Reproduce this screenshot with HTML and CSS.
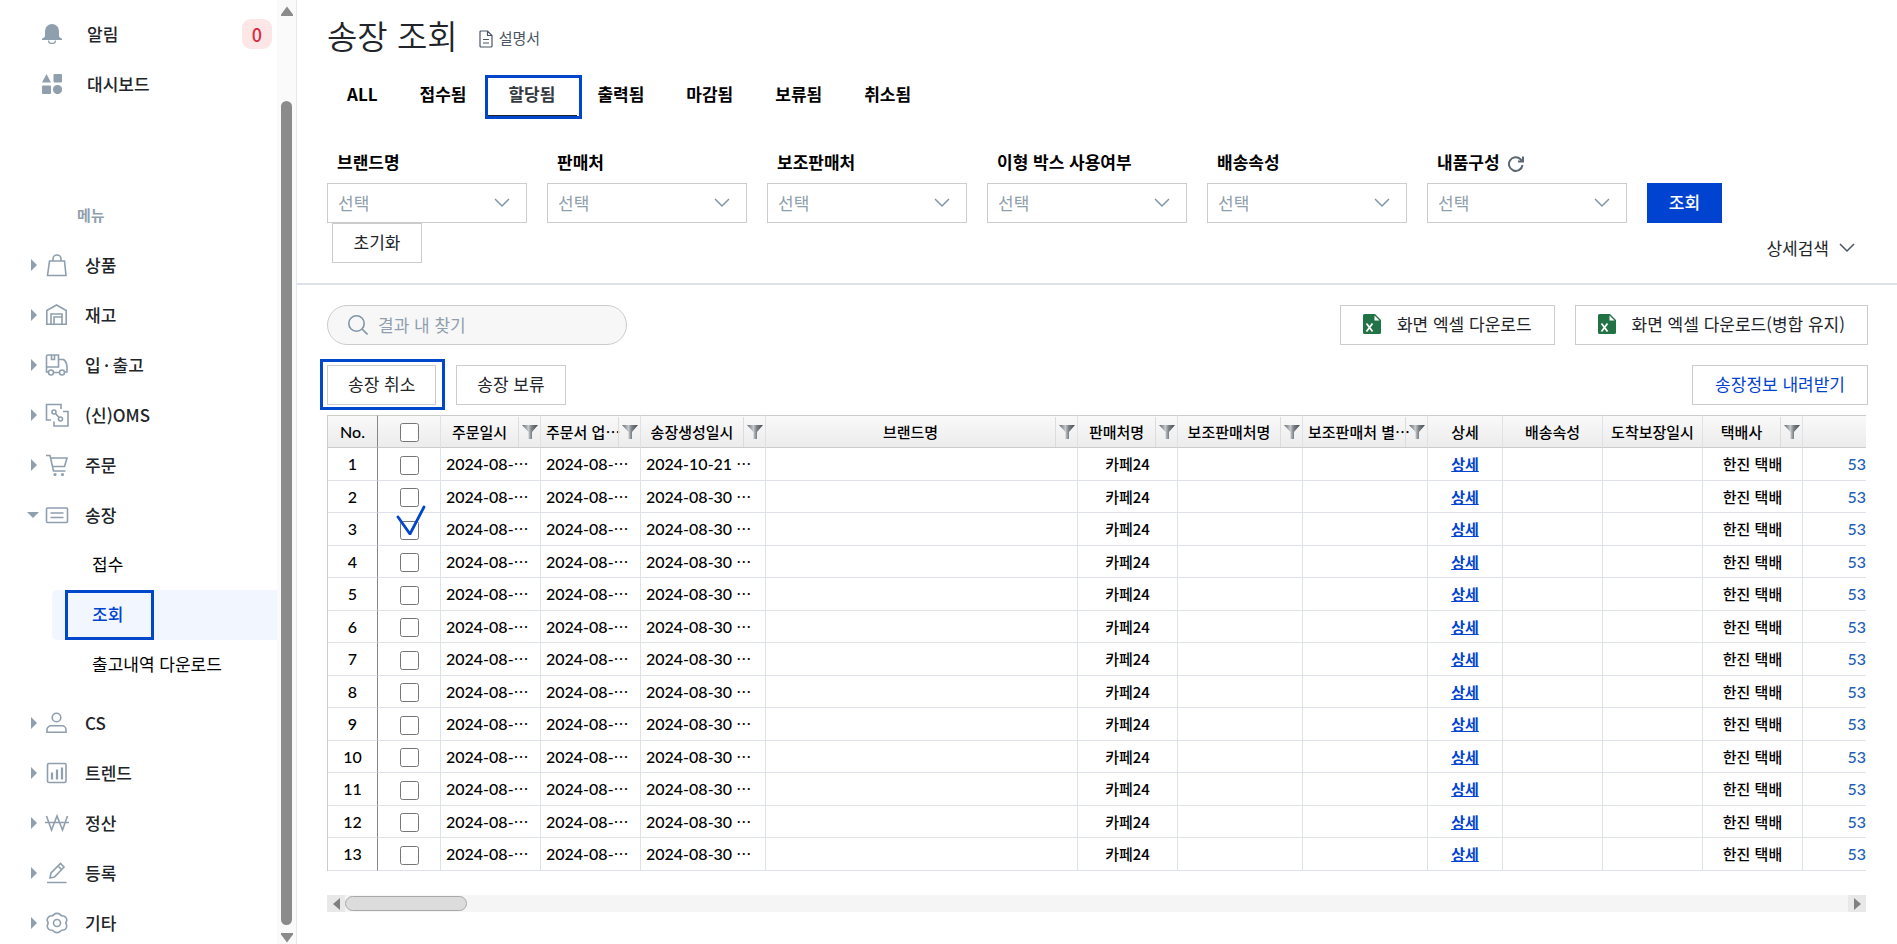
FILE: index.html
```html
<!DOCTYPE html>
<html lang="ko">
<head>
<meta charset="utf-8">
<title>송장 조회</title>
<link rel="stylesheet" href="styles.css">
</head>
<body>
<svg class="defs" aria-hidden="true">
  <defs>
    <linearGradient id="funnel-fill" x1="0" x2="1" y1="0" y2="0">
      <stop offset="0" stop-color="#5f6469"/><stop offset=".4" stop-color="#c5cace"/><stop offset=".6" stop-color="#7d8388"/><stop offset="1" stop-color="#44484c"/>
    </linearGradient>
    <symbol id="funnel" viewBox="0 0 16 14"><path d="M0 0h16L10 7v7H6.500V7z" fill="url(#funnel-fill)"/></symbol>
    <symbol id="chevron" viewBox="0 0 16 10"><path d="M1 1l7 7 7-7" fill="none" stroke="currentColor" stroke-width="1.500"/></symbol>
    <symbol id="excel" viewBox="0 0 18 20"><path d="M1.500 0H12l6 6v12.500a1.500 1.500 0 0 1-1.500 1.500h-15A1.500 1.500 0 0 1 0 18.500v-17A1.500 1.500 0 0 1 1.500 0z" fill="#217346"/><path d="M11.500 1.500V6.500h5z" fill="#fff"/><path d="M3.500 9.500l6 8M9.500 9.500l-6 8" stroke="#fff" stroke-width="1.800"/></symbol>
  </defs>
</svg>
<div class="app">
  <aside class="sidebar">
    <nav class="menu">
      <a class="top-item" href="#"><svg class="top-icon" viewBox="0 0 20 20"><path d="M10 0a7 7 0 0 1 7 7v4.500c0 1.500 1 2.500 3 3V16H0v-1.500c2-.5 3-1.500 3-3V7a7 7 0 0 1 7-7z" fill="currentColor"/><path d="M6.500 16.500a3.500 3 0 0 0 7 0" fill="none" stroke="currentColor" stroke-width="1.400"/></svg><span>알림</span><span class="badge">0</span></a>
      <a class="top-item" href="#"><svg class="top-icon" viewBox="0 0 20 20" fill="currentColor"><path d="M4.500 0L9 8.500H0z"/><rect x="11.500" width="8.500" height="8.500" rx="1"/><rect y="11.500" width="9" height="8.500" rx="1"/><circle cx="15.500" cy="15.500" r="4.600"/></svg><span>대시보드</span></a>
      <p class="menu-label">메뉴</p>
      <a class="item" href="#"><span class="caret"></span><svg class="icon" viewBox="0 0 24 24"><path d="M4.500 8h15l1.500 14.500H2.500zM8 8V6a4 4 0 0 1 8 0v2"/></svg><span>상품</span></a>
      <a class="item" href="#"><span class="caret"></span><svg class="icon" viewBox="0 0 24 24"><path d="M1.800 21.300V7.500L11.500 2l9.700 5.500v13.800zM6 21V11h11v10M9 21v-7h8"/></svg><span>재고</span></a>
      <a class="item" href="#"><span class="caret"></span><svg class="icon" viewBox="0 0 24 24"><path d="M3 19H1.500V3.500A1.500 1.500 0 0 1 3 2h10.500v12H2M6.500 2v4.500h3V2M9 19.500h5M14 6.500h4.500c2 1.500 3.500 5 3.500 8V19h-2"/><circle cx="6" cy="19.500" r="2.500"/><circle cx="17" cy="19.500" r="2.500"/></svg><span>입&thinsp;·&thinsp;출고</span></a>
      <a class="item" href="#"><span class="caret"></span><svg class="icon" viewBox="0 0 24 24"><path d="M6 17H1.500V1.500H16V6M18 8.500h5V23H9v-4.500M10.500 10.500l3.500 4"/><circle cx="9" cy="9" r="2"/><circle cx="15.500" cy="16" r="2"/></svg><span>(신)OMS</span></a>
      <a class="item" href="#"><span class="caret"></span><svg class="icon" viewBox="0 0 24 24"><path d="M1 2.500h4l3.500 15.500h12M5.700 5h16.300l-2.500 8.500H7.500"/><circle cx="10" cy="21.500" r=".8"/><circle cx="17.500" cy="21.500" r=".8"/></svg><span>주문</span></a>
      <a class="item" href="#"><span class="caret open"></span><svg class="icon" viewBox="0 0 24 24"><rect x="1.500" y="5" width="21" height="14.500" rx="1"/><path d="M5.500 10h13M5.500 14.500h13"/></svg><span>송장</span></a>
      <a class="sub-item" href="#">접수</a>
      <a class="sub-item current" href="#"><span>조회</span></a>
      <a class="sub-item" href="#">출고내역 다운로드</a>
      <a class="item spaced" href="#"><span class="caret"></span><svg class="icon" viewBox="0 0 24 24"><circle cx="11.500" cy="6.500" r="4.300"/><path d="M2 21.300v-2.500a4 4 0 0 1 4-4h11a4 4 0 0 1 4 4v2.500z"/></svg><span>CS</span></a>
      <a class="item" href="#"><span class="caret"></span><svg class="icon" viewBox="0 0 24 24"><rect x="2.500" y="2.500" width="18.500" height="19" rx="1.500"/><path d="M7 18.500v-7M12 18.500V8.500M17 18.500v-12" stroke-width="2.200"/></svg><span>트렌드</span></a>
      <a class="item" href="#"><span class="caret"></span><svg class="icon" viewBox="0 0 24 24"><path d="M1.500 5L6.500 19 12 5l5.500 14L22.500 5M0 11.500h24"/></svg><span>정산</span></a>
      <a class="item" href="#"><span class="caret"></span><svg class="icon" viewBox="0 0 24 24"><path d="M2 21.500h19.500M5 17l1-5 9.500-9.500 3.500 3.500L9.500 16zM13 5l3.500 3.500"/></svg><span>등록</span></a>
      <a class="item" href="#"><span class="caret"></span><svg class="icon" viewBox="0 0 24 24"><circle cx="12" cy="12" r="3.500"/><path d="M9 3.500c1-1.500 5-1.500 6 0s1.500 1.500 3.500 1.500 4 3.500 3 5-1 2.500 0 4-1 5-3 5-2.500 0-3.500 1.500-5 1.500-6 0S7.500 19 5.500 19s-4-3.500-3-5 1-2.500 0-4 1-5 3-5 2.500 0 3.500-1.500z"/></svg><span>기타</span></a>
    </nav>
    <div class="vbar" aria-hidden="true"><svg viewBox="0 0 12 10"><path d="M6 0.500L12 8.500v1.500H0V8.500z"/></svg><div class="vtrack"></div><svg viewBox="0 0 12 10"><path d="M6 9.500L12 1.500V0H0v1.500z"/></svg></div>
  </aside>

  <main class="main">
    <section class="filters">
      <header class="heading">
        <h1>송장 조회</h1>
        <a class="manual" href="#"><svg viewBox="0 0 14 18"><path d="M1 2a1 1 0 0 1 1-1h6.500L13 5.500V16a1 1 0 0 1-1 1H2a1 1 0 0 1-1-1zM8.500 1v4.500H13M4 9.500h6M4 13h6"/></svg><span>설명서</span></a>
      </header>
      <div class="tabs">
        <button>ALL</button><button>접수됨</button><button class="active">할당됨</button><button>출력됨</button><button>마감됨</button><button>보류됨</button><button>취소됨</button>
      </div>
      <form class="search-form">
        <div class="field"><label for="f1">브랜드명</label><div class="select"><select id="f1"><option>선택</option></select><svg><use href="#chevron"/></svg></div></div>
        <div class="field"><label for="f2">판매처</label><div class="select"><select id="f2"><option>선택</option></select><svg><use href="#chevron"/></svg></div></div>
        <div class="field"><label for="f3">보조판매처</label><div class="select"><select id="f3"><option>선택</option></select><svg><use href="#chevron"/></svg></div></div>
        <div class="field"><label for="f4">이형 박스 사용여부</label><div class="select"><select id="f4"><option>선택</option></select><svg><use href="#chevron"/></svg></div></div>
        <div class="field"><label for="f5">배송속성</label><div class="select"><select id="f5"><option>선택</option></select><svg><use href="#chevron"/></svg></div></div>
        <div class="field"><label for="f6">내품구성 <svg class="refresh" viewBox="0 0 16 16"><path d="M14.500 9A6.800 6.800 0 1 1 12.500 3.200L15 5.500M15 .5v5h-5"/></svg></label><div class="select"><select id="f6"><option>선택</option></select><svg><use href="#chevron"/></svg></div></div>
        <button type="button" class="btn primary">조회</button>
      </form>
      <div class="form-foot">
        <button class="btn reset">초기화</button>
        <button class="detail">상세검색 <svg><use href="#chevron"/></svg></button>
      </div>
    </section>

    <section class="results">
      <div class="row">
        <label class="find"><svg viewBox="0 0 20 20"><circle cx="8.500" cy="8.500" r="7.700"/><path d="M14 14l5.500 5.500"/></svg><input type="text" placeholder="결과 내 찾기" aria-label="결과 내 찾기"></label>
        <div class="group"><button class="btn wide excel"><svg><use href="#excel"/></svg>화면 엑셀 다운로드</button><button class="btn wide excel"><svg><use href="#excel"/></svg>화면 엑셀 다운로드(병합 유지)</button></div>
      </div>
      <div class="row">
        <div class="group"><button class="btn marked">송장 취소</button><button class="btn">송장 보류</button></div>
        <button class="btn wide blue">송장정보 내려받기</button>
      </div>
      <div class="grid">
        <table>
          <colgroup><col class="w50"><col class="w63"><col class="w100"><col class="w100"><col class="w125"><col><col class="w100"><col class="w125"><col class="w125"><col class="w75"><col class="w100"><col class="w100"><col class="w100"><col class="w63"></colgroup>
          <thead><tr>
            <th class="num">No.</th>
            <th><input type="checkbox" aria-label="전체 선택"></th>
            <th><div class="head"><span>주문일시</span><i><svg><use href="#funnel"/></svg></i></div></th>
            <th><div class="head long"><span>주문서 업…</span><i><svg><use href="#funnel"/></svg></i></div></th>
            <th><div class="head"><span>송장생성일시</span><i><svg><use href="#funnel"/></svg></i></div></th>
            <th><div class="head"><span>브랜드명</span><i><svg><use href="#funnel"/></svg></i></div></th>
            <th><div class="head"><span>판매처명</span><i><svg><use href="#funnel"/></svg></i></div></th>
            <th><div class="head"><span>보조판매처명</span><i><svg><use href="#funnel"/></svg></i></div></th>
            <th><div class="head long"><span>보조판매처 별…</span><i><svg><use href="#funnel"/></svg></i></div></th>
            <th>상세</th><th>배송속성</th><th>도착보장일시</th>
            <th><div class="head"><span>택배사</span><i><svg><use href="#funnel"/></svg></i></div></th>
            <th></th>
          </tr></thead>
          <tbody id="rows"></tbody>
        </table>
      </div>
      <div class="hbar" aria-hidden="true"><span><svg viewBox="0 0 7 12"><path d="M7 0v12L0 6z"/></svg></span><div class="htrack"><div class="hthumb"></div></div><span><svg viewBox="0 0 7 12"><path d="M0 0v12l7-6z"/></svg></span></div>
    </section>
  </main>
</div>
<script src="rows.js"></script>
</body>
</html>
```

FILE: rows.js
```js
const body = document.getElementById('rows');
for (let n = 1; n <= 13; n++) {
  const created = n === 1 ? '2024-10-21' : '2024-08-30';
  const mark = n === 3 ? '<svg class="tick" viewBox="0 0 30 30"><path d="M2 12l12 17L28 2"/></svg>' : '';
  body.insertAdjacentHTML('beforeend', `<tr>
    <td class="num">${n}</td>
    <td class="check"><input type="checkbox" aria-label="${n}번 선택">${mark}</td>
    <td class="date">2024-08-<span>…</span></td>
    <td class="date">2024-08-<span>…</span></td>
    <td class="date">${created} <span>…</span></td>
    <td></td><td>카페24</td><td></td><td></td>
    <td><a href="#">상세</a></td><td></td><td></td><td>한진 택배</td>
    <td class="invoice">53</td>
  </tr>`);
}
```

FILE: styles.css
```css
*, *::after { box-sizing: border-box; }
body { margin: 0; background: #fff; color: #212529; font: 500 17px/24px "Noto Sans CJK KR", sans-serif; }
button, input, select { font: inherit; color: inherit; margin: 0; }
a { color: inherit; text-decoration: none; }
.defs { position: absolute; width: 0; height: 0; }
.app { display: grid; grid-template-columns: 297px minmax(0, 1fr); height: 100vh; overflow: hidden; }

.sidebar { display: flex; border-right: 1px solid #e5e7ea; overflow: hidden; }
.menu { flex: 1; padding-top: 9px; }
.top-item, .item, .sub-item { display: flex; align-items: center; height: 50px; }
.top-item { padding: 0 5px 0 42px; gap: 25px; }
.top-icon { width: 20px; height: 20px; color: #8f9fad; }
.badge { margin-left: auto; width: 30px; height: 30px; border-radius: 9px; background: #fce6e6; color: #d92b3f; text-align: center; line-height: 30px; font-size: 18px; }
.menu-label { margin: 81px 0 0 77px; height: 50px; line-height: 50px; font-size: 15px; font-weight: 700; color: #8f9fad; }
.item { padding-left: 31px; }
.item.spaced { margin-top: 8px; }
.caret { width: 0; border: 6px solid transparent; border-left-color: #8f9fad; border-right: 0; }
.caret.open { border: 6px solid transparent; border-top-color: #8f9fad; border-bottom: 0; margin: 0 -2px 0 -4px; }
.icon { width: 24px; height: 24px; margin: 0 16px 0 8px; fill: none; stroke: #8f9fad; stroke-width: 1.6; }
.sub-item { margin-left: 52px; padding: 0 0 2px 40px; color: #000; font-weight: 400; }
.sub-item.current { position: relative; background: #f2f7ff; color: #0043d1; border-radius: 5px 0 0 5px; font-weight: 500; }
.sub-item.current::after { content: ""; position: absolute; inset: 0 auto 0 13px; width: 89px; border: 3px solid #0047cc; }
.vbar { width: 19px; background: #fafafa; display: flex; flex-direction: column; align-items: center; padding: 6px 0 1px; }
.vbar svg { width: 12px; height: 10px; fill: #8b8b8b; }
.vtrack { flex: 1; width: 11px; margin: 85px 0 8px; border-radius: 6px; background: #8b8b8b; }

.filters { padding: 11px 29px 20px 30px; border-bottom: 2px solid #dee2e8; }
.heading { display: flex; align-items: center; gap: 21px; height: 48px; }
h1 { margin: 0; font-size: 33px; font-weight: 350; line-height: 48px; }
.manual { display: flex; align-items: center; gap: 6px; font-size: 15px; font-weight: 400; color: #495565; padding-top: 6px; }
.manual svg { width: 14px; height: 18px; margin-top: 2px; fill: none; stroke: #495565; stroke-width: 1.2; }
.tabs { display: flex; margin-top: 18px; }
.tabs button { height: 40px; padding: 0 22px 7px 20px; border: 0; background: none; font-weight: 700; color: #000; }
.tabs .active { position: relative; color: #343a40; border-bottom: 2px solid #212529; padding-bottom: 5px; }
.tabs .active::after { content: ""; position: absolute; inset: -2px -5px -4px -3px; border: 3px solid #0047cc; }
.search-form { display: flex; align-items: flex-end; gap: 20px; margin-top: 33px; }
.field { flex: 0 1 200px; }
.field label { display: flex; align-items: center; gap: 8px; padding: 0 10px; height: 24px; margin-bottom: 9px; font-weight: 700; color: #000; white-space: nowrap; }
.refresh { width: 16px; height: 16px; margin-top: 4px; fill: none; stroke: #5d6772; stroke-width: 2; }
.select { display: grid; align-items: center; }
.select > * { grid-area: 1 / 1; }
.select select { width: 100%; height: 40px; padding: 0 10px; border: 1px solid #ccc; border-radius: 0; background: #fff; appearance: none; font-weight: 400; color: #8f9fad; }
.select svg { justify-self: end; width: 16px; height: 10px; margin-right: 17px; color: #8095a5; pointer-events: none; }
.btn { height: 40px; padding: 0 20px 2px; border: 1px solid #ccc; background: #fff; font-weight: 400; white-space: nowrap; }
.btn.wide { padding: 0 22px 2px; }
.btn.primary { width: 75px; border: 0; background: #0043d1; color: #fff; font-weight: 500; }
.form-foot { display: flex; justify-content: space-between; align-items: flex-start; }
.reset { width: 90px; margin-left: 5px; }
.detail { display: flex; align-items: center; gap: 10px; margin-top: 13px; padding: 0 13px 0 0; border: 0; background: none; font-weight: 400; }
.detail svg { width: 16px; height: 10px; color: #495565; }

.results { padding: 20px 29px 0 30px; }
.row { display: flex; justify-content: space-between; margin-bottom: 20px; }
.row + .row { margin-bottom: 10px; }
.group { display: flex; gap: 20px; }
.find { display: flex; align-items: center; gap: 10px; width: 300px; height: 40px; padding: 0 20px; border: 1px solid #ccc; border-radius: 20px; background: #f7f7f7; }
.find svg { flex: none; width: 20px; height: 20px; fill: none; stroke: #8095a5; stroke-width: 1.6; }
.find input { width: 100%; border: 0; padding: 0; background: none; outline: 0; font-weight: 400; }
.find input::placeholder { color: #8f9fad; }
.excel { display: flex; align-items: center; gap: 16px; }
.excel svg { width: 18px; height: 20px; }
.blue { color: #0043d1; }
.marked { position: relative; }
.marked::after { content: ""; position: absolute; inset: -7px -10px -6px -8px; border: 3px solid #0047cc; }

.grid { margin-right: 2px; overflow: hidden; border-left: 1px solid #ccc; }
table { width: 100%; table-layout: fixed; border-collapse: separate; border-spacing: 0; font-size: 15px; line-height: 20px; color: #000; }
.w50 { width: 50px; } .w63 { width: 63px; } .w75 { width: 75px; } .w100 { width: 100px; } .w125 { width: 125px; }
th { height: 33px; padding: 0; border: 0 solid #ccc; border-width: 1px 0; background: linear-gradient(#f9f9f9, #ececec); font-weight: 500; white-space: nowrap; }
th:not(:last-child), td:not(:last-child) { border-right: 1px solid #dee2e8; }
th.num:first-child, td.num { border-right-color: #888; }
.num, .date, .invoice { font-family: Lato, sans-serif; font-size: 16px; }
.head { display: flex; height: 31px; align-items: center; }
.head span { flex: 1; min-width: 0; }
.head.long span { padding-left: 5px; text-align: left; }
.head i { display: flex; flex: none; width: 22px; height: 30px; align-items: center; justify-content: center; border-left: 1px solid #dcdcdc; }
.head svg { width: 16px; height: 14px; }
td { height: 32px; padding: 0; text-align: center; border-bottom: 1px solid #dee2e8; white-space: nowrap; font-weight: 500; }
tr:nth-child(odd) td { height: 33px; }
td.date { padding-left: 5px; text-align: left; overflow: hidden; }
.date span { font-family: "Noto Sans CJK KR", sans-serif; font-size: 15px; font-weight: 400; line-height: 20px; }
td.invoice { text-align: right; color: #1f5fb8; }
td a { color: #0043d1; font-weight: 700; text-decoration: underline; }
th input, td input { display: block; width: 19px; height: 19px; margin: 2px auto 0; }
td.check { position: relative; }
.tick { position: absolute; left: 18px; top: -8px; width: 30px; height: 30px; fill: none; stroke: #0047cc; stroke-width: 2.8; stroke-linecap: round; pointer-events: none; }

.hbar { display: flex; height: 17px; margin: 24px 2px 0 0; background: #f5f5f5; }
.hbar span { display: flex; align-items: center; justify-content: center; width: 18px; background: #e8e8e8; }
.hbar span svg { width: 7px; height: 12px; fill: #808080; }
.htrack { flex: 1; padding: 1px 0; }
.hthumb { width: 122px; height: 15px; border: 1px solid #a8a8a8; border-radius: 8px; background: #dcdcdc; }
```
